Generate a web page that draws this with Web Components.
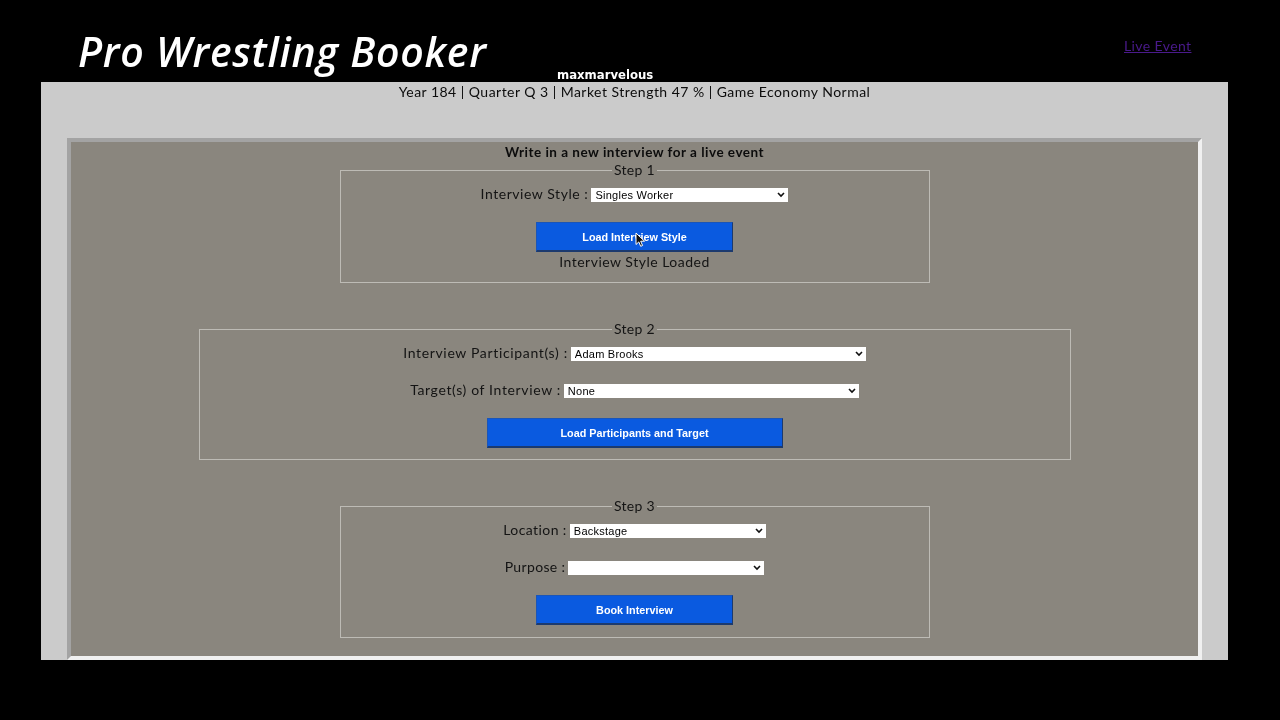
<!DOCTYPE html>
<html>
<head>
<meta charset="utf-8">
<title>Pro Wrestling Booker</title>
<style>
  html, body { margin: 0; height: 100%; background: #000; overflow: hidden; }
  body { font-family: "Lato", "Liberation Sans", sans-serif; color: #111; filter: blur(.35px); }
</style>
</head>
<body>
<pwb-header user="maxmarvelous" link="Live Event">Pro Wrestling Booker</pwb-header>
<pwb-main status="Year 184 | Quarter Q 3 | Market Strength 47 % | Game Economy Normal">
  <pwb-panel heading="Write in a new interview for a live event">
    <pwb-step legend="Step 1" width="590">
      <pwb-field label="Interview Style" options="Singles Worker" select-width="197" spacing=".55"></pwb-field>
      <pwb-button width="197">Load Interview Style</pwb-button>
      <pwb-note>Interview Style Loaded</pwb-note>
    </pwb-step>
    <pwb-step legend="Step 2" width="872">
      <pwb-field label="Interview Participant(s)" options="Adam Brooks" select-width="295" spacing=".66"></pwb-field>
      <pwb-field label="Target(s) of Interview" options="None" select-width="295" spacing=".64"></pwb-field>
      <pwb-button width="296">Load Participants and Target</pwb-button>
    </pwb-step>
    <pwb-step legend="Step 3" width="590">
      <pwb-field label="Location" options="Backstage" select-width="196" spacing=".42"></pwb-field>
      <pwb-field label="Purpose" options="" select-width="196" spacing=".35"></pwb-field>
      <pwb-button width="197">Book Interview</pwb-button>
    </pwb-step>
  </pwb-panel>
</pwb-main>
<pwb-cursor></pwb-cursor>

<script>
const chevron = "data:image/svg+xml,%3Csvg xmlns='http://www.w3.org/2000/svg' width='8' height='6'%3E%3Cpath d='M1 1l3 3 3-3' fill='none' stroke='%23111' stroke-width='1.6'/%3E%3C/svg%3E";

class PwbHeader extends HTMLElement {
  constructor() {
    super();
    this.attachShadow({ mode: 'open' });
  }

  connectedCallback() {
    this.shadowRoot.innerHTML = `
      <style>
        :host { display: grid; grid-template-columns: 479px 567px auto; height: 82px; box-sizing: border-box; padding-left: 78px; }
        h1 {
          margin: 26px 0 0; font: italic 600 41px/50px "Open Sans", sans-serif;
          color: #fff; white-space: nowrap; letter-spacing: .72px;
        }
        .user {
          margin-top: 67px; font: bold 11.7px/16px "DejaVu Sans", sans-serif; color: #fff;
        }
        a {
          justify-self: start; height: 18px;
          margin-top: 37px; font: 14px/18px "Lato", sans-serif; color: #4a1a8c; letter-spacing: .4px;
        }
      </style>
      <h1><slot></slot></h1>
      <span class="user">${this.getAttribute('user')}</span>
      <a href="#">${this.getAttribute('link')}</a>
    `;
  }
}

class PwbMain extends HTMLElement {
  constructor() {
    super();
    this.attachShadow({ mode: 'open' });
  }

  connectedCallback() {
    this.shadowRoot.innerHTML = `
      <style>
        :host { display: block; width: 1187px; height: 578px; margin-left: 41px; background: #cbcbcb; overflow: hidden; }
        p { margin: 0; height: 56px; text-align: center; font-size: 14px; line-height: 20px; letter-spacing: .47px; color: #0c0c0c; }
      </style>
      <p>${this.getAttribute('status')}</p>
      <slot></slot>
    `;
  }
}

class PwbPanel extends HTMLElement {
  constructor() {
    super();
    this.attachShadow({ mode: 'open' });
  }

  connectedCallback() {
    this.shadowRoot.innerHTML = `
      <style>
        :host {
          display: flex; flex-direction: column; align-items: center; gap: 38px;
          box-sizing: border-box; width: 1135px; height: 522px; margin-left: 26px;
          background: #8a867e;
          border: 4px solid; border-color: #a3a3a3 #f0f0f0 #f0f0f0 #a3a3a3;
        }
        h2 { margin: 2px 0 -36px; font-size: 13.5px; line-height: 16px; font-weight: 700; letter-spacing: .5px; color: #0c0c0c; height: 16px; }
      </style>
      <h2>${this.getAttribute('heading')}</h2>
      <slot></slot>
    `;
  }
}

class PwbStep extends HTMLElement {
  constructor() {
    super();
    this.attachShadow({ mode: 'open' });
  }

  connectedCallback() {
    this.shadowRoot.innerHTML = `
      <style>
        :host { display: block; width: ${this.getAttribute('width')}px; }
        fieldset {
          margin: 0; padding: 7px 0 11.3px; border: 1px solid #bdbbb5;
          display: flex; flex-direction: column; align-items: center; gap: 17px;
        }
        legend { padding: 0 2px; margin: 0 auto; font-size: 14px; line-height: 16px; letter-spacing: .3px; color: #141414; }
      </style>
      <fieldset>
        <legend>${this.getAttribute('legend')}</legend>
        <slot></slot>
      </fieldset>
    `;
  }
}

class PwbField extends HTMLElement {
  constructor() {
    super();
    this.attachShadow({ mode: 'open' });
  }

  connectedCallback() {
    const opts = this.getAttribute('options');
    this.shadowRoot.innerHTML = `
      <style>
        :host { display: flex; align-items: center; gap: 3px; height: 20px; font-size: 14px; letter-spacing: ${this.getAttribute('spacing')}px; color: #141414; }
        label { margin-bottom: 3px; }
        select {
          appearance: none;
          width: ${this.getAttribute('select-width')}px; height: 14px; padding: 0 0 0 4px; margin: 0;
          border: 0; border-radius: 0; color: #000;
          background: #fff url("${chevron}") no-repeat right 3px center;
          font: 11px/14px "Liberation Sans", sans-serif; letter-spacing: .25px;
        }
      </style>
      <label>${this.getAttribute('label')} :</label>
      <select><option>${opts}</option></select>
    `;
  }
}

class PwbButton extends HTMLElement {
  constructor() {
    super();
    this.attachShadow({ mode: 'open' });
  }

  connectedCallback() {
    this.shadowRoot.innerHTML = `
      <style>
        :host { display: block; width: ${this.getAttribute('width')}px; }
        button {
          display: block; width: 100%; height: 30px; padding: 0; margin: 0;
          background: #0a5ae0; color: #fff; cursor: pointer;
          border: 0; border-right: 1px solid #1c3a6e; border-bottom: 2px solid #1c3a6e; border-top: 1px solid #1a55b8; border-left: 1px solid #1a55b8;
          font: bold 10.8px "Liberation Sans", sans-serif;
        }
      </style>
      <button type="button"><slot></slot></button>
    `;
  }
}

class PwbNote extends HTMLElement {
  constructor() {
    super();
    this.attachShadow({ mode: 'open' });
  }

  connectedCallback() {
    this.shadowRoot.innerHTML = `
      <style>
        :host { display: block; margin-top: -17px; margin-bottom: -1.3px; font-size: 14px; line-height: 20px; letter-spacing: .5px; color: #141414; }
      </style>
      <slot></slot>
    `;
  }
}

class PwbCursor extends HTMLElement {
  constructor() {
    super();
    this.attachShadow({ mode: 'open' });
  }

  connectedCallback() {
    this.shadowRoot.innerHTML = `
      <style>
        :host { position: absolute; left: 635px; top: 232px; width: 12px; height: 16px; }
        svg { display: block; }
      </style>
      <svg width="12" height="16" viewBox="0 0 12 16">
        <path d="M1 1v11.5l2.8-2.6 1.9 4.4 1.9-.8-1.9-4.3h3.8z" fill="#111" stroke="#fff" stroke-width="1"/>
      </svg>
    `;
  }
}

customElements.define('pwb-header', PwbHeader);
customElements.define('pwb-main', PwbMain);
customElements.define('pwb-panel', PwbPanel);
customElements.define('pwb-step', PwbStep);
customElements.define('pwb-field', PwbField);
customElements.define('pwb-button', PwbButton);
customElements.define('pwb-note', PwbNote);
customElements.define('pwb-cursor', PwbCursor);
</script>
</body>
</html>
